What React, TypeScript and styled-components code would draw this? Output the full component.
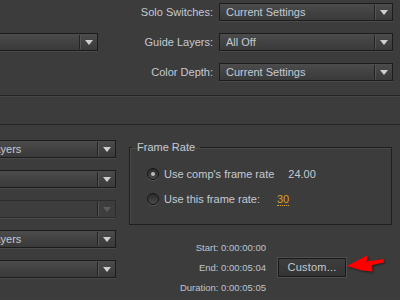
import React from 'react'
import styled, { createGlobalStyle } from 'styled-components'

const colors = {
  panel: '#3c3c3c',
  text: '#c4cad3',
  dark: '#1c1c1c',
  orange: '#d9a11c',
}

const GlobalStyle = createGlobalStyle`
  html, body {
    margin: 0;
    padding: 0;
    background: ${colors.panel};
  }
  body {
    font-family: "Liberation Sans", Arial, sans-serif;
    font-size: 11px;
    color: ${colors.text};
  }
`

const Viewport = styled.div`
  width: 400px;
  height: 300px;
  overflow: hidden;
  background: ${colors.panel};
`

/* the dialog continues past the left edge of the shot */
const Dialog = styled.div`
  width: 434px;
  margin-left: -34px;
`

const TopSection = styled.section`
  display: grid;
  grid-template-columns: 132px 1fr 174px;
  grid-auto-rows: 18px;
  column-gap: 6px;
  row-gap: 12px;
  padding: 3px 7px 0 0;
  height: 96px;
  box-sizing: border-box;
  border-bottom: 1px solid #242424;
`

const Band = styled.div`
  height: 27px;
  border-top: 1px solid #464646;
  border-bottom: 1px solid #242424;
`

const Label = styled.label`
  grid-column: 2;
  justify-self: end;
  align-self: center;
  white-space: nowrap;
`

const Select = styled.div<{ $disabled?: boolean }>`
  display: flex;
  align-items: stretch;
  height: 18px;
  box-sizing: border-box;
  border: 1px solid ${(p) => (p.$disabled ? '#2c2c2c' : colors.dark)};
  background: ${(p) =>
    p.$disabled
      ? '#3d3d3d'
      : 'linear-gradient(to bottom, #4c4c4c 0%, #424242 50%, #3a3a3a 100%)'};
  box-shadow: 0 1px 0 #4a4a4a;
`

const SelectText = styled.span<{ $disabled?: boolean }>`
  flex: 1;
  padding-left: 6px;
  line-height: 16px;
  white-space: nowrap;
  overflow: hidden;
  color: ${(p) => (p.$disabled ? '#6a6a6a' : colors.text)};
`

const SelectDivider = styled.span`
  width: 1px;
  margin: 1px 0;
  background: #222;
  box-shadow: 1px 0 0 #555;
`

const SelectArrow = styled.span<{ $disabled?: boolean }>`
  width: 17px;
  display: flex;
  align-items: center;
  justify-content: center;

  &::after {
    content: '';
    border-left: 4px solid transparent;
    border-right: 4px solid transparent;
    border-top: 5px solid ${(p) => (p.$disabled ? '#5c5c5c' : '#cfcfcf')};
  }
`

const BottomSection = styled.section`
  display: grid;
  grid-template-columns: 150px 263px;
  column-gap: 13px;
  padding-top: 15px;
  align-items: start;
`

const SelectColumn = styled.div`
  display: flex;
  flex-direction: column;
  gap: 12px;
`

const RightColumn = styled.div`
  display: flex;
  flex-direction: column;
`

const Group = styled.fieldset`
  margin: 0;
  padding: 11px 0 16px 17px;
  border: 1px solid #1f1f1f;
  box-shadow: inset 1px 1px 0 #4a4a4a;
  display: flex;
  flex-direction: column;
  gap: 7px;
`

const Legend = styled.legend`
  margin-left: -15px;
  padding: 0 5px;
  line-height: 14px;
  font-size: 11px;
`

const RadioRow = styled.div`
  display: flex;
  align-items: center;
  height: 18px;
`

const Radio = styled.span<{ $checked?: boolean }>`
  width: 12px;
  height: 12px;
  box-sizing: border-box;
  border-radius: 50%;
  border: 1px solid #161616;
  background: linear-gradient(to bottom, #2b2b2b, #4a4a4a);
  box-shadow: 0 1px 0 #555;
  display: flex;
  align-items: center;
  justify-content: center;
  margin-right: 5px;

  &::after {
    content: '';
    width: 4px;
    height: 4px;
    border-radius: 50%;
    background: ${(p) => (p.$checked ? '#bdbdbd' : 'transparent')};
  }
`

const Value = styled.span<{ $gap: number }>`
  margin-left: ${(p) => p.$gap}px;
`

const Editable = styled.span<{ $gap: number }>`
  margin-left: ${(p) => p.$gap}px;
  color: ${colors.orange};
  border-bottom: 1px dotted ${colors.orange};
  line-height: 12px;
`

const Timing = styled.div`
  display: grid;
  grid-template-columns: 137px auto auto 1fr;
  grid-auto-rows: 20px;
  column-gap: 12px;
  margin-top: 12px;
  align-items: center;
`

const TimeLine = styled.div`
  grid-column: 1;
  justify-self: end;
  font-size: 9.5px;
  color: #bcc4cf;
  white-space: nowrap;
`

const Button = styled.button`
  grid-column: 2;
  grid-row: 2;
  width: 68px;
  height: 19px;
  padding: 0;
  border: 1px solid #1a1a1a;
  box-shadow: 0 0 0 1px #4e4e4e;
  background: linear-gradient(to bottom, #3e3e3e, #333);
  font-family: inherit;
  font-size: 11px;
  color: ${colors.text};
  letter-spacing: 0.2px;
`

const Arrow = styled.svg`
  grid-column: 3;
  grid-row: 2;
  margin-left: -14px;
  display: block;
  filter: drop-shadow(1px 1px 1px rgba(0, 0, 0, 0.5));
`

const Dropdown = ({ text = '', disabled }: { text?: string; disabled?: boolean }) => (
  <Select $disabled={disabled}>
    <SelectText $disabled={disabled}>{text}</SelectText>
    <SelectDivider />
    <SelectArrow $disabled={disabled} />
  </Select>
)

const App = () => {
  return (
    <Viewport>
      <GlobalStyle />
      <Dialog>
        <TopSection>
          <Label style={{ gridRow: 1 }}>Solo Switches:</Label>
          <div style={{ gridColumn: 3, gridRow: 1 }}>
            <Dropdown text="Current Settings" />
          </div>
          <div style={{ gridColumn: 1, gridRow: 2 }}>
            <Dropdown />
          </div>
          <Label style={{ gridRow: 2 }}>Guide Layers:</Label>
          <div style={{ gridColumn: 3, gridRow: 2 }}>
            <Dropdown text="All Off" />
          </div>
          <Label style={{ gridRow: 3 }}>Color Depth:</Label>
          <div style={{ gridColumn: 3, gridRow: 3 }}>
            <Dropdown text="Current Settings" />
          </div>
        </TopSection>
        <Band />
        <BottomSection>
          <SelectColumn>
            <Dropdown text="All Layers" />
            <Dropdown />
            <Dropdown disabled />
            <Dropdown text="All Layers" />
            <Dropdown />
          </SelectColumn>
          <RightColumn>
            <Group>
              <Legend>Frame Rate</Legend>
              <RadioRow>
                <Radio $checked />
                Use comp's frame rate
                <Value $gap={14}>24.00</Value>
              </RadioRow>
              <RadioRow>
                <Radio />
                Use this frame rate:
                <Editable $gap={17}>30</Editable>
              </RadioRow>
            </Group>
            <Timing>
              <TimeLine>Start: 0:00:00:00</TimeLine>
              <TimeLine>End: 0:00:05:04</TimeLine>
              <TimeLine>Duration: 0:00:05:05</TimeLine>
              <Button>Custom...</Button>
              <Arrow width="44" height="26" viewBox="0 0 44 26">
                <path
                  d="M3 12 L24 1 L22.5 7.5 L39.5 5 L40 8.5 L28 11 L28.5 17.5 L18 16.5 Z"
                  fill="#ff0000"
                />
              </Arrow>
            </Timing>
          </RightColumn>
        </BottomSection>
      </Dialog>
    </Viewport>
  )
}

export default App
